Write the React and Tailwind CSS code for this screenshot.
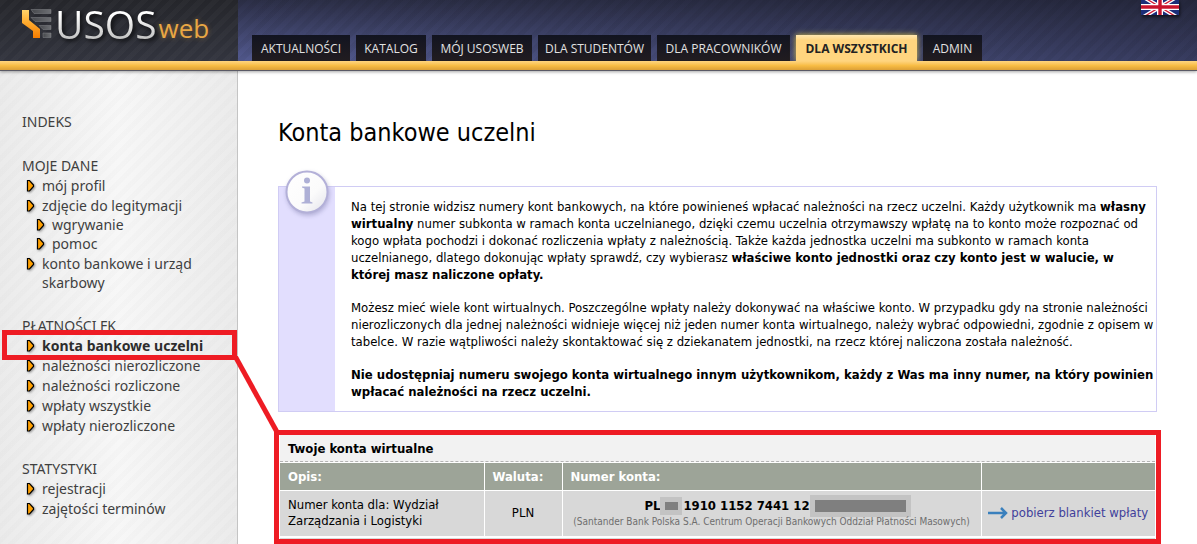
import React from "react";

const tabs = [
  { label: "AKTUALNOŚCI", width: "min-w-[98px]" },
  { label: "KATALOG", width: "min-w-[70px]" },
  { label: "MÓJ USOSWEB", width: "min-w-[100px]" },
  { label: "DLA STUDENTÓW", width: "min-w-[113px]" },
  { label: "DLA PRACOWNIKÓW", width: "min-w-[133px]" },
  { label: "DLA WSZYSTKICH", width: "min-w-[121px]", active: true },
  { label: "ADMIN", width: "min-w-[59px]" },
];

const menu = [
  { title: "INDEKS", items: [] },
  {
    title: "MOJE DANE",
    items: [
      { label: "mój profil" },
      { label: "zdjęcie do legitymacji", children: ["wgrywanie", "pomoc"] },
      { label: "konto bankowe i urząd skarbowy" },
    ],
  },
  {
    title: "PŁATNOŚCI FK",
    items: [
      { label: "konta bankowe uczelni", active: true },
      { label: "należności nierozliczone" },
      { label: "należności rozliczone" },
      { label: "wpłaty wszystkie" },
      { label: "wpłaty nierozliczone" },
    ],
  },
  {
    title: "STATYSTYKI",
    items: [{ label: "rejestracji" }, { label: "zajętości terminów" }],
  },
];

function LogoMark() {
  return (
    <svg width="32" height="31" viewBox="0 0 32 31" aria-hidden="true">
      <defs>
        <linearGradient id="mark" x1="0" y1="0" x2="0" y2="1">
          <stop offset="0" stopColor="#ffd36b" />
          <stop offset="0.45" stopColor="#ffab2e" />
          <stop offset="1" stopColor="#f57c00" />
        </linearGradient>
        <linearGradient id="bar" x1="0" y1="0" x2="1" y2="0">
          <stop offset="0" stopColor="#46484c" />
          <stop offset="1" stopColor="#6e7074" />
        </linearGradient>
      </defs>
      <path d="M1 2H8V12L19 21V30H12V23L1 15Z" fill="url(#mark)" />
      <g fill="url(#bar)" stroke="#85878a" strokeWidth="0.5">
        <path d="M10 1.500H30V5.500H13Z" />
        <path d="M10 9.500H30V13.500H14Z" />
        <path d="M18 17.500H30V21.500H22Z" />
        <path d="M22 25H30V29.500H22Z" />
      </g>
    </svg>
  );
}

function Flag() {
  return (
    <svg width="38" height="15" viewBox="0 0 38 15" aria-hidden="true">
      <rect width="38" height="15" fill="#1b2d78" />
      <path d="M0 -4.500L38 18.500M38 -4.500L0 18.500" stroke="#fff" strokeWidth="4" />
      <path d="M0 -4.500L38 18.500M38 -4.500L0 18.500" stroke="#cf1b34" strokeWidth="1.300" />
      <path d="M19 0V15" stroke="#fff" strokeWidth="6" />
      <path d="M0 7H38" stroke="#fff" strokeWidth="6" />
      <path d="M19 0V15M0 7H38" stroke="#c8142d" strokeWidth="3.400" />
    </svg>
  );
}

function Bullet() {
  return (
    <svg width="12" height="14" viewBox="0 0 12 14" className="mt-[3px] shrink-0 drop-shadow-[1px_1px_1px_rgba(0,0,0,0.4)]" aria-hidden="true">
      <path d="M1.500 1.500H3.500L7.500 6V7.500L3.500 12H1.500Z" fill="#ffa000" stroke="#000" strokeWidth="1.200" />
    </svg>
  );
}

function InfoIcon() {
  return (
    <svg width="50" height="50" viewBox="0 0 50 50" aria-hidden="true" className="drop-shadow-[1px_2px_2px_rgba(90,90,140,0.35)]">
      <defs>
        <linearGradient id="disc" x1="0" y1="0" x2="1" y2="1">
          <stop offset="0" stopColor="#ffffff" />
          <stop offset="0.6" stopColor="#fbfbfb" />
          <stop offset="1" stopColor="#e2e2ea" />
        </linearGradient>
      </defs>
      <circle cx="24" cy="24" r="20.500" fill="url(#disc)" stroke="#b3b0d8" strokeWidth="2" />
      <circle cx="24" cy="12.500" r="3" fill="#aeb0d6" />
      <path d="M19 18.500H27V33.500L29.500 34.500V35.500H18.500V34.500L21.500 33.500V20.500L19 19.500Z" fill="#aeb0d6" />
    </svg>
  );
}

function MenuLink({ label, active }) {
  return (
    <a href="#" className={active ? "relative flex font-bold text-[#2d2d2d]" : "flex"}>
      <span className="flex w-4 shrink-0">
        <Bullet />
      </span>
      <span>{label}</span>
      {active && <span className="absolute -left-6 -top-[6px] h-[30px] w-[235px] border-[5px] border-[#ee1c24]" />}
    </a>
  );
}

function Sidebar() {
  return (
    <nav className="w-[238px] shrink-0 border-r border-[#c4c4c4] bg-[repeating-linear-gradient(135deg,rgba(0,0,0,0.012)_0px,rgba(0,0,0,0.012)_5px,transparent_5px,transparent_10px),linear-gradient(90deg,#ebebeb,#f7f7f7_50%,#ebebeb)] pl-[22px] pt-[41px] font-['Noto_Sans','Open_Sans',sans-serif] text-[14px] leading-[19px] text-[#3f3f3f]">
      {menu.map((group) => (
        <section key={group.title} className="mb-6">
          <h2 className="h-5 leading-5">
            <a href="#">{group.title}</a>
          </h2>
          <ul className="flex flex-col gap-px pl-1 pr-6">
            {group.items.map((item) => (
              <li key={item.label}>
                <MenuLink label={item.label} active={item.active} />
                {item.children && (
                  <ul className="pl-[10px]">
                    {item.children.map((child) => (
                      <li key={child}>
                        <MenuLink label={child} />
                      </li>
                    ))}
                  </ul>
                )}
              </li>
            ))}
          </ul>
        </section>
      ))}
    </nav>
  );
}

function Header() {
  return (
    <header className="relative z-10 font-['Open_Sans','Noto_Sans',sans-serif] shadow-[0_1px_3px_rgba(0,0,0,0.35)]">
      <div className="flex h-[61px] bg-[repeating-linear-gradient(135deg,rgba(0,0,0,0.05)_0px,rgba(0,0,0,0.05)_5px,transparent_5px,transparent_10px),linear-gradient(90deg,transparent_20%,rgba(30,32,50,0.5)),linear-gradient(180deg,#2c2f47,#535a90)]">
        <a href="#" className="flex w-[238px] shrink-0 items-start bg-[repeating-linear-gradient(135deg,rgba(255,255,255,0.025)_0px,rgba(255,255,255,0.025)_5px,transparent_5px,transparent_10px),linear-gradient(180deg,#25262b,#32343e)] pl-[21px]">
          <span className="pt-2">
            <LogoMark />
          </span>
          <span className="bg-linear-to-b from-white from-30% to-[#c4c4c4] to-80% bg-clip-text pl-[2px] text-[39px] font-medium leading-[48px] text-transparent drop-shadow-[2px_2px_2px_rgba(0,0,0,0.8)]">
            USOS
          </span>
          <span className="pl-[2px] pt-[9px] text-[26px] leading-[38px] text-[#e9a744] [text-shadow:0_0_5px_rgba(233,167,68,0.4)]">
            web
          </span>
        </a>
        <nav className="flex grow items-end gap-[6px] pl-[14px] text-[12px] leading-[27px]">
          {tabs.map((tab) => (
            <a
              key={tab.label}
              href="#"
              className={`${tab.width} h-[26px] whitespace-nowrap text-center ${
                tab.active
                  ? "bg-linear-to-b from-[#ffe7b0] to-[#ffd57f] to-20% font-bold text-[#222] shadow-[0_0_6px_rgba(255,225,70,0.8)]"
                  : "bg-linear-to-b from-[#121420] to-[#211c20] text-[#e2e2e2]"
              }`}
            >
              {tab.label}
            </a>
          ))}
        </nav>
        <a href="#" aria-label="English" className="mr-[18px] h-[15px] w-[38px] shrink-0 shadow-[1px_2px_3px_rgba(0,0,0,0.6)]">
          <Flag />
        </a>
      </div>
      <div className="relative h-[10px] border-b border-[#5a5a66] bg-linear-to-b from-[#ffd57f] via-[#f8bd45] to-[#dca036]" />
    </header>
  );
}

function AccountsTable() {
  return (
    <div className="-mx-1 mt-[18px] border-[5px] border-[#ee1c24] bg-white px-px">
      <table className="w-full table-fixed border-collapse text-left">
        <caption className="h-[27px] border-b border-dashed border-[#b4b4b4] bg-[#f2f2f2] pl-2 text-left font-bold leading-[27px]">
          Twoje konta wirtualne
        </caption>
        <colgroup>
          <col className="w-[204px]" />
          <col className="w-[78px]" />
          <col />
          <col className="w-[174px]" />
        </colgroup>
        <thead>
          <tr className="h-[28px] bg-[#9da498] text-white">
            <th className="border-y border-r border-white pl-2">Opis:</th>
            <th className="border-y border-r border-white pl-2">Waluta:</th>
            <th className="border-y border-r border-white pl-2">Numer konta:</th>
            <th className="border-y border-white" aria-label="Akcje" />
          </tr>
        </thead>
        <tbody>
          <tr className="h-[46px] bg-[#d8d8d8] leading-4">
            <td className="border-b-2 border-r border-white pl-2">
              Numer konta dla: Wydział
              <br />
              Zarządzania i Logistyki
            </td>
            <td className="border-b-2 border-r border-white text-center">PLN</td>
            <td className="whitespace-nowrap border-b-2 border-r border-white text-center">
              <div className="flex h-[18px] items-center justify-center pl-3 font-bold">
                PL
                <span className="mr-px flex h-[18px] w-[22px] items-center justify-center bg-[#c3c3c3]">
                  <span className="h-2 w-[13px] bg-[#7f7f7f]" />
                </span>
                1910 1152 7441 12
                <span className="flex h-[22px] w-[101px] items-center justify-center bg-[#c3c3c3]">
                  <span className="h-3 w-[91px] bg-[#7f7f7f]" />
                </span>
              </div>
              <div className="text-[10px] leading-[14px] text-[#6e6e6e]">
                (Santander Bank Polska S.A. Centrum Operacji Bankowych Oddział Płatności Masowych)
              </div>
            </td>
            <td className="border-b-2 border-white">
              <a href="#" className="flex items-center justify-center gap-[3px] whitespace-nowrap text-[#41419b]">
                <svg width="20" height="12" viewBox="0 0 20 12" aria-hidden="true">
                  <path d="M0 6H18M13 1L18 6L13 11" fill="none" stroke="#3a80bd" strokeWidth="2.500" />
                </svg>
                pobierz blankiet wpłaty
              </a>
            </td>
          </tr>
        </tbody>
      </table>
      <div className="h-px bg-[#d8d8d8]" />
    </div>
  );
}

export default function App() {
  return (
    <div className="flex min-h-screen flex-col bg-white">
      <Header />
      <div className="flex grow">
        <Sidebar />
        <main className="relative min-w-0 grow pl-10 pr-10 font-['DejaVu_Sans_Condensed','DejaVu_Sans',sans-serif] text-[13px] leading-[17px] text-black">
          <h1 className="pt-[46px] text-[25px] leading-8">Konta bankowe uczelni</h1>
          <section className="relative mt-[37px] flex border border-[#d0ccf4]">
            <div className="w-[56px] shrink-0 bg-[#e2defe]" />
            <div className="absolute left-1 -top-[19px]">
              <InfoIcon />
            </div>
            <div className="flex flex-col gap-4 whitespace-nowrap py-[11px] pl-4">
              <p>
                Na tej stronie widzisz numery kont bankowych, na które powinieneś wpłacać należności na rzecz uczelni. Każdy użytkownik ma <b>własny</b>
                <br />
                <b>wirtualny</b> numer subkonta w ramach konta uczelnianego, dzięki czemu uczelnia otrzymawszy wpłatę na to konto może rozpoznać od
                <br />
                kogo wpłata pochodzi i dokonać rozliczenia wpłaty z należnością. Także każda jednostka uczelni ma subkonto w ramach konta
                <br />
                uczelnianego, dlatego dokonując wpłaty sprawdź, czy wybierasz <b>właściwe konto jednostki oraz czy konto jest w walucie, w</b>
                <br />
                <b>której masz naliczone opłaty.</b>
              </p>
              <p>
                Możesz mieć wiele kont wirtualnych. Poszczególne wpłaty należy dokonywać na właściwe konto. W przypadku gdy na stronie należności
                <br />
                nierozliczonych dla jednej należności widnieje więcej niż jeden numer konta wirtualnego, należy wybrać odpowiedni, zgodnie z opisem w
                <br />
                tabelce. W razie wątpliwości należy skontaktować się z dziekanatem jednostki, na rzecz której naliczona została należność.
              </p>
              <p className="font-bold">
                Nie udostępniaj numeru swojego konta wirtualnego innym użytkownikom, każdy z Was ma inny numer, na który powinien
                <br />
                wpłacać należności na rzecz uczelni.
              </p>
            </div>
          </section>
          <AccountsTable />
          <svg className="pointer-events-none absolute -left-1 top-[285px]" width="48" height="80" viewBox="0 0 48 80" aria-hidden="true">
            <path d="M1 0L43 76" stroke="#ee1c24" strokeWidth="5" />
          </svg>
        </main>
      </div>
    </div>
  );
}
